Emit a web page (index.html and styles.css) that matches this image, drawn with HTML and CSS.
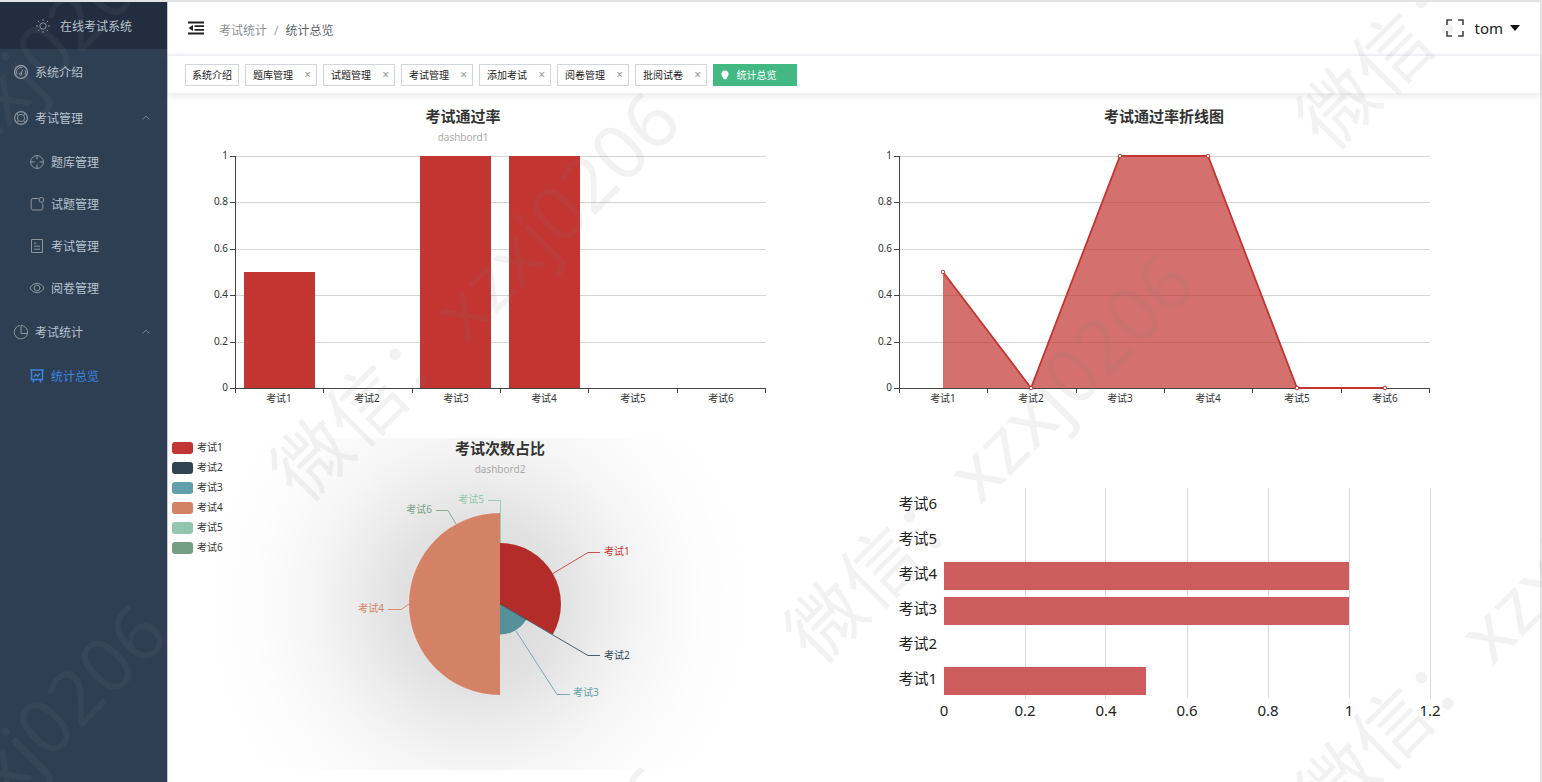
FILE: index.html
```html
<!DOCTYPE html>
<html lang="zh-CN">
<head>
<meta charset="utf-8">
<title>在线考试系统</title>
<link rel="stylesheet" href="styles.css">
</head>
<body>
<div class="app">
  <aside class="sidebar">
    <div class="logo">
      <svg class="icon" viewBox="0 0 16 16"><circle cx="8" cy="8" r="3.200"/><path d="M8 1v2M8 13v2M1 8h2M13 8h2M3 3l1.400 1.400M11.600 11.600L13 13M13 3l-1.400 1.400M4.400 11.600L3 13"/></svg>
      <span>在线考试系统</span>
    </div>
    <nav class="menu">
      <a class="item" href="#">
        <svg class="icon" viewBox="0 0 16 16"><circle cx="8" cy="8" r="6.400" stroke-width="1.500"/><path d="M4 10.500A4.700 4.700 0 0 1 9.500 3.700M12 6a4.700 4.700 0 0 1 0 4.500M9.800 5.500L8 9.500"/><circle cx="7.700" cy="10" r="1.200"/></svg>
        <span>系统介绍</span>
      </a>
      <button class="item" type="button">
        <svg class="icon" viewBox="0 0 16 16"><circle cx="8" cy="8" r="6.400" stroke-width="1.200"/><circle cx="8" cy="8" r="3.600"/><path d="M5.400 5.400L3.400 3.400M10.600 5.400l2-2M5.400 10.600l-2 2M10.600 10.600l2 2"/></svg>
        <span>考试管理</span>
        <svg class="chevron" viewBox="0 0 10 10"><path d="M1.500 6.500L5 3.200l3.500 3.300"/></svg>
      </button>
      <a class="item sub" href="#">
        <svg class="icon" viewBox="0 0 16 16"><circle cx="8" cy="8" r="6.400"/><path d="M8 1.500v4M8 10.500v4M1.500 8h4M10.500 8h4"/></svg>
        <span>题库管理</span>
      </a>
      <a class="item sub" href="#">
        <svg class="icon" viewBox="0 0 16 16"><path d="M9.500 2.500H4A1.800 1.800 0 0 0 2.200 4.300v8A1.800 1.800 0 0 0 4 14h8a1.800 1.800 0 0 0 1.800-1.800V7.500"/><circle cx="12.400" cy="3.900" r="2.400"/></svg>
        <span>试题管理</span>
      </a>
      <a class="item sub" href="#">
        <svg class="icon" viewBox="0 0 16 16"><path d="M2.500 1.500h11v13h-11zM5 5.200h2.500M5 8.200h6M5 11.200h6"/></svg>
        <span>考试管理</span>
      </a>
      <a class="item sub" href="#">
        <svg class="icon" viewBox="0 0 16 16"><path d="M1 8C4.400 1.800 11.600 1.800 15 8 11.600 14.200 4.400 14.200 1 8z"/><circle cx="8" cy="8" r="2.900"/></svg>
        <span>阅卷管理</span>
      </a>
      <button class="item" type="button">
        <svg class="icon" viewBox="0 0 16 16"><path d="M7 1.500A6.700 6.700 0 1 0 14.500 9.500H8V1.500A6.700 6.700 0 0 1 14.500 9.500"/></svg>
        <span>考试统计</span>
        <svg class="chevron" viewBox="0 0 10 10"><path d="M1.500 6.500L5 3.200l3.500 3.300"/></svg>
      </button>
      <a class="item sub active" href="#" aria-current="page">
        <svg class="icon" viewBox="0 0 16 16" stroke-width="1.500"><path d="M1.200 2h13.600M2.500 2v9.500h11V2M5 8.800l2-2.300 1.800 1.600L11 5.400M5 11.500L4 14.500M11 11.500l1 3"/></svg>
        <span>统计总览</span>
      </a>
    </nav>
  </aside>

  <main class="main">
    <header class="topbar">
      <button class="icon-button" type="button" aria-label="折叠菜单">
        <svg class="fold" viewBox="0 0 16 14"><path d="M0 1.500h16M6.500 5.200H16M6.500 8.800H16M0 12.500h16" stroke="#222" stroke-width="1.800"/><path d="M5 4v6L.5 7z" fill="#222"/></svg>
      </button>
      <div class="crumbs"><a href="#">考试统计</a><span class="slash">/</span><span class="current">统计总览</span></div>
      <button class="icon-button" type="button" aria-label="全屏">
        <svg class="full" viewBox="0 0 18 18"><path d="M1 6V1h5M12 1h5v5M17 12v5h-5M6 17H1v-5" fill="none" stroke="#444" stroke-width="1.600"/></svg>
      </button>
      <button class="user" type="button">tom<span class="caret"></span></button>
    </header>

    <div class="tags">
      <div class="tag home"><a href="#">系统介绍</a></div>
      <div class="tag"><a href="#">题库管理</a><button type="button" aria-label="关闭">×</button></div>
      <div class="tag"><a href="#">试题管理</a><button type="button" aria-label="关闭">×</button></div>
      <div class="tag"><a href="#">考试管理</a><button type="button" aria-label="关闭">×</button></div>
      <div class="tag"><a href="#">添加考试</a><button type="button" aria-label="关闭">×</button></div>
      <div class="tag"><a href="#">阅卷管理</a><button type="button" aria-label="关闭">×</button></div>
      <div class="tag"><a href="#">批阅试卷</a><button type="button" aria-label="关闭">×</button></div>
      <div class="tag on"><svg class="pin" viewBox="0 0 8 10"><path d="M4 .5a3.600 3.600 0 0 1 3.600 3.600C7.600 6 6 7.300 5.200 9.300H2.800C2 7.300.4 6 .4 4.100A3.600 3.600 0 0 1 4 .5z"/></svg><a href="#">统计总览</a><button type="button" aria-label="关闭">×</button></div>
    </div>

    <section class="charts">
      <svg class="chart" viewBox="0 0 664 332" role="img" aria-label="考试通过率">
        <text class="title" x="295" y="23">考试通过率</text>
        <text class="subtitle" x="295" y="42">dashbord1</text>
        <path class="grid" d="M67 57.500H598M67 103.500H598M67 150.500H598M67 196.500H598M67 243.500H598"/>
        <g fill="#c23531"><rect x="76" y="173" width="71" height="116"/><rect x="252" y="57" width="71" height="232"/><rect x="341" y="57" width="71" height="232"/></g>
        <path class="axis" d="M67.500 57V289.500H598M62 57.500h5M62 103.500h5M62 150.500h5M62 196.500h5M62 243.500h5M62 289.500h5M67.500 289v5M155.500 289v5M244.500 289v5M332.500 289v5M420.500 289v5M509.500 289v5M597.500 289v5"/>
        <g class="tick end"><text x="60" y="60">1</text><text x="60" y="106">0.8</text><text x="60" y="153">0.6</text><text x="60" y="199">0.4</text><text x="60" y="246">0.2</text><text x="60" y="292">0</text></g>
        <g class="tick mid"><text x="111" y="303">考试1</text><text x="199" y="303">考试2</text><text x="288" y="303">考试3</text><text x="376" y="303">考试4</text><text x="465" y="303">考试5</text><text x="553" y="303">考试6</text></g>
      </svg>

      <svg class="chart" viewBox="0 0 664 332" role="img" aria-label="考试通过率折线图">
        <text class="title" x="332" y="23">考试通过率折线图</text>
        <path class="grid" d="M67 57.500H598M67 103.500H598M67 150.500H598M67 196.500H598M67 243.500H598"/>
        <path class="axis" d="M67.500 57V289.500H598M62 57.500h5M62 103.500h5M62 150.500h5M62 196.500h5M62 243.500h5M62 289.500h5M67.500 289v5M155.500 289v5M244.500 289v5M332.500 289v5M420.500 289v5M509.500 289v5M597.500 289v5"/>
        <path d="M111 173L199 289 288 57H376L465 289H111z" fill="#c23531" fill-opacity=".7"/>
        <path d="M111 173L199 289 288 57H376L465 289H553" fill="none" stroke="#c23531" stroke-width="1.800"/>
        <g fill="#fff" stroke="#c23531"><circle cx="111" cy="173" r="1.800"/><circle cx="199" cy="289" r="1.800"/><circle cx="288" cy="57" r="1.800"/><circle cx="376" cy="57" r="1.800"/><circle cx="465" cy="289" r="1.800"/><circle cx="553" cy="289" r="1.800"/></g>
        <g class="tick end"><text x="60" y="60">1</text><text x="60" y="106">0.8</text><text x="60" y="153">0.6</text><text x="60" y="199">0.4</text><text x="60" y="246">0.2</text><text x="60" y="292">0</text></g>
        <g class="tick mid"><text x="111" y="303">考试1</text><text x="199" y="303">考试2</text><text x="288" y="303">考试3</text><text x="376" y="303">考试4</text><text x="465" y="303">考试5</text><text x="553" y="303">考试6</text></g>
      </svg>

      <svg class="chart" viewBox="0 0 664 332" role="img" aria-label="考试次数占比">
        <defs>
          <radialGradient id="shade" gradientUnits="userSpaceOnUse" cx="310" cy="166" r="280">
            <stop offset="0" stop-opacity=".16"/><stop offset=".3" stop-opacity=".115"/><stop offset=".45" stop-opacity=".072"/><stop offset=".6" stop-opacity=".037"/><stop offset=".8" stop-opacity=".01"/><stop offset="1" stop-opacity="0"/>
          </radialGradient>
        </defs>
        <rect width="664" height="332" fill="url(#shade)"/>
        <path d="M332 166V105A61 61 0 0 1 384.800 196.500z" fill="#b32c29"/>
        <path d="M332 166L358.400 181.200A30.500 30.500 0 0 1 332 196.500z" fill="#569199"/>
        <path d="M332 75A91 91 0 0 0 332 257z" fill="#d48265"/>
        <g fill="none" stroke-opacity=".85">
          <path d="M385 135.500L420 114.500H432" stroke="#c23531"/>
          <path d="M332 166L420 217.500H432" stroke="#2f4554"/>
          <path d="M348 193L389 256.500H402" stroke="#61a0a8"/>
          <path d="M241 166L233 171.500H220" stroke="#d48265"/>
          <path d="M332.500 105V62.500H320" stroke="#91c7ae"/>
          <path d="M288 86L280 72.500H268" stroke="#749f83"/>
        </g>
        <text class="title" x="332" y="16">考试次数占比</text>
        <text class="subtitle" x="332" y="35">dashbord2</text>
        <g class="label">
          <text x="436" y="117" fill="#c23531">考试1</text><text x="436" y="221" fill="#2f4554">考试2</text><text x="405" y="258" fill="#61a0a8">考试3</text>
        </g>
        <g class="label end">
          <text x="216" y="174" fill="#d48265">考试4</text><text x="316" y="65" fill="#91c7ae">考试5</text><text x="264" y="75" fill="#749f83">考试6</text>
        </g>
        <rect x="4" y="4" width="21" height="12" rx="3" fill="#c23531"/><rect x="4" y="24" width="21" height="12" rx="3" fill="#2f4554"/><rect x="4" y="44" width="21" height="12" rx="3" fill="#61a0a8"/><rect x="4" y="64" width="21" height="12" rx="3" fill="#d48265"/><rect x="4" y="84" width="21" height="12" rx="3" fill="#91c7ae"/><rect x="4" y="104" width="21" height="12" rx="3" fill="#749f83"/>
        <g class="tick"><text x="29" y="13">考试1</text><text x="29" y="33">考试2</text><text x="29" y="53">考试3</text><text x="29" y="73">考试4</text><text x="29" y="93">考试5</text><text x="29" y="113">考试6</text></g>
      </svg>

      <svg class="chart" viewBox="0 0 664 332" role="img" aria-label="考试通过率条形图">
        <path d="M193.500 50V260M273.500 50V260M355.500 50V260M436.500 50V260M517.500 50V260M598.500 50V260" stroke="#dcdcdc"/>
        <g fill="#cd5c5c"><rect x="112" y="124" width="405" height="28"/><rect x="112" y="159" width="405" height="28"/><rect x="112" y="229" width="202" height="28"/></g>
        <g class="big end"><text x="105" y="71">考试6</text><text x="105" y="106">考试5</text><text x="105" y="141">考试4</text><text x="105" y="176">考试3</text><text x="105" y="211">考试2</text><text x="105" y="246">考试1</text></g>
        <g class="big mid"><text x="112" y="278">0</text><text x="193" y="278">0.2</text><text x="274" y="278">0.4</text><text x="355" y="278">0.6</text><text x="436" y="278">0.8</text><text x="517" y="278">1</text><text x="598" y="278">1.2</text></g>
      </svg>
    </section>
  </main>

  <svg class="watermark" aria-hidden="true">
    <g transform="translate(-202 296) rotate(-45)"><text x="-38" y="29">微信：xzxj0206</text></g>
    <g transform="translate(-202 971) rotate(-45)"><text x="-38" y="29">微信：xzxj0206</text></g>
    <g transform="translate(311 458) rotate(-45)"><text x="-38" y="29">微信：xzxj0206</text></g>
    <g transform="translate(311 1133) rotate(-45)"><text x="-38" y="29">微信：xzxj0206</text></g>
    <g transform="translate(825 620) rotate(-45)"><text x="-38" y="29">微信：xzxj0206</text></g>
    <g transform="translate(1337 106) rotate(-45)"><text x="-38" y="29">微信：xzxj0206</text></g>
    <g transform="translate(1337 781) rotate(-45)"><text x="-38" y="29">微信：xzxj0206</text></g>
  </svg>
</div>
</body>
</html>
```
FILE: styles.css
```css
* { box-sizing: border-box; }

body {
  margin: 0;
  font-family: "Noto Sans", "Noto Sans CJK SC", sans-serif;
  font-size: 12px;
  color: #303133;
  background: #fff;
}

a { color: inherit; text-decoration: none; }

button {
  font: inherit;
  color: inherit;
  background: none;
  border: 0;
  padding: 0;
  cursor: pointer;
}

.app {
  position: relative;
  display: flex;
  min-height: 100vh;
  overflow: hidden;
  border-top: 2px solid #e2e3e5;
}

/* Sidebar */
.sidebar {
  flex: 0 0 168px;
  background: #2e3f54;
  border-right: 1px solid #c4c8d0;
  color: #b9c3cf;
}

.logo {
  display: flex;
  align-items: center;
  justify-content: center;
  gap: 9px;
  height: 47px;
  background: #222e40;
}

.menu { display: flex; flex-direction: column; }

.item {
  display: flex;
  align-items: center;
  gap: 6px;
  width: 100%;
  height: 46px;
  padding: 0 16px 0 13px;
  text-align: left;
}

.item.sub { height: 42px; padding-left: 29px; }

.item.active { color: #3a84e0; }

.icon {
  width: 16px;
  height: 16px;
  fill: none;
  stroke: #8d959e;
}

.item.active .icon { stroke: #3a84e0; }

.chevron {
  width: 10px;
  height: 10px;
  margin-left: auto;
  fill: none;
  stroke: #76818e;
}

/* Header */
.main {
  flex: 1;
  min-width: 0;
  border-right: 2px solid #e2e2e2;
}

.topbar {
  display: flex;
  align-items: center;
  height: 54px;
  padding: 0 20px;
  border-bottom: 2px solid #f5f6fa;
}

.icon-button { display: flex; }

.fold { width: 16px; height: 14px; }

.full { width: 18px; height: 18px; }

.crumbs {
  flex: 1;
  padding: 4px 0 0 15px;
  color: #8c8f94;
}

.slash { margin: 0 7px; color: #a5a9b0; }

.current { color: #606266; }

.user {
  display: flex;
  align-items: center;
  gap: 7px;
  padding-left: 10px;
  font-size: 15px;
  color: #222;
}

.caret {
  border: 5px solid transparent;
  border-top: 6px solid #111;
  border-bottom: 0;
}

/* Open page tags */
.tags {
  position: relative;
  display: flex;
  align-items: center;
  gap: 6px;
  height: 37px;
  padding-left: 17px;
  background: #fff;
  box-shadow: 0 2px 8px rgba(0, 0, 0, .1);
}

.tag {
  display: flex;
  align-items: center;
  justify-content: space-between;
  width: 72px;
  height: 22px;
  padding: 0 5px 0 7px;
  border: 1px solid #d2d5db;
  font-size: 10px;
  color: #222;
}

.tag.home { width: 54px; padding: 0 6px; }

.tag button { font-size: 12px; color: #999; }

.tag.on {
  width: 84px;
  background: #42b983;
  border-color: #42b983;
  color: #fff;
}

.tag.on button { color: #5fa98a; }

.pin { width: 8px; height: 10px; fill: #fff; }

/* Charts */
.charts {
  display: grid;
  grid-template-columns: repeat(2, minmax(0, 664px));
  gap: 7px 0;
  padding-top: 6px;
}

.chart { display: block; width: 100%; }

.title {
  font-size: 15px;
  font-weight: 700;
  fill: #333;
  text-anchor: middle;
}

.subtitle { font-size: 10px; fill: #aaa; text-anchor: middle; }

.grid { stroke: #d4d4d4; }

.axis { fill: none; stroke: #444; }

.tick { font-size: 10px; fill: #333; }

.label { font-size: 10px; }

.big { font-size: 15px; fill: #222; }

.mid { text-anchor: middle; }

.end { text-anchor: end; }

/* Diagonal watermark laid over the whole page */
.watermark {
  position: absolute;
  top: -2px;
  left: 0;
  width: 100%;
  height: 100%;
  overflow: visible;
  pointer-events: none;
  font-size: 76px;
  fill: rgba(128, 128, 128, .1);
}
```
